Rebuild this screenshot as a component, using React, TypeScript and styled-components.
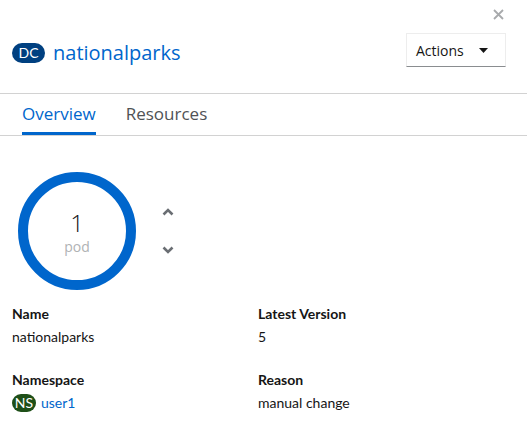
import React from "react";
import styled, { createGlobalStyle } from "styled-components";

const GlobalStyle = createGlobalStyle`
  html, body { margin: 0; padding: 0; background: #fff; }
  body { font-family: "Open Sans", "Liberation Sans", sans-serif; color: #151515; }
  * { box-sizing: border-box; }
`;

const Page = styled.div`
  width: 527px;
  height: 426px;
  background: #fff;
  overflow: hidden;
`;

const Header = styled.div`
  display: flex;
  flex-direction: column;
  padding: 9px 23px 26px 12px;
  border-bottom: 1px solid #d2d2d2;
`;

const CloseRow = styled.div`
  display: flex;
  justify-content: flex-end;
  height: 10px;
`;

const CloseButton = styled.button`
  border: 0;
  padding: 0;
  background: none;
  width: 11px;
  height: 11px;
  display: flex;
  cursor: pointer;
`;

const TitleRow = styled.div`
  display: flex;
  justify-content: space-between;
  align-items: center;
  margin-top: 14px;
`;

const Title = styled.h1`
  display: flex;
  align-items: center;
  gap: 8px;
  margin: 6px 0 0;
  font-weight: 400;
`;

const Badge = styled.span<{ $bg: string; $w: number; $h: number; $fs: number }>`
  display: inline-flex;
  align-items: center;
  justify-content: center;
  width: ${(p) => p.$w}px;
  height: ${(p) => p.$h}px;
  border-radius: ${(p) => p.$h / 2}px;
  background: ${(p) => p.$bg};
  color: #fff;
  font-family: "Lato", "Open Sans", sans-serif;
  font-size: ${(p) => p.$fs}px;
  line-height: 1;
  flex-shrink: 0;
`;

const ResourceName = styled.span`
  font-size: 20px;
  line-height: 24px;
  color: #0066cc;
`;

const ActionsButton = styled.button`
  display: flex;
  align-items: center;
  justify-content: space-between;
  width: 100px;
  height: 34px;
  margin-right: -2px;
  padding: 0 17px 0 9px;
  background: #fff;
  border: 1px solid #ededed;
  border-bottom-color: #8a8d90;
  font-family: inherit;
  font-size: 14px;
  color: #151515;
  cursor: pointer;
`;

const Tabs = styled.nav`
  display: flex;
  gap: 30px;
  padding: 0 0 0 22px;
  border-bottom: 1px solid #d2d2d2;
`;

const Tab = styled.div<{ $active?: boolean }>`
  padding: 8px 0 6px;
  font-size: 17px;
  line-height: 24px;
  color: ${(p) => (p.$active ? "#0066cc" : "#4f5255")};
  border-bottom: 3px solid ${(p) => (p.$active ? "#0066cc" : "transparent")};
`;

const Body = styled.div`
  padding: 36px 12px 0;
  display: flex;
  flex-direction: column;
`;

const PodRow = styled.div`
  display: flex;
  align-items: center;
  gap: 26px;
  padding-left: 6px;
`;

const DonutWrap = styled.div`
  position: relative;
  width: 118px;
  height: 118px;
`;

const DonutLabel = styled.div`
  position: absolute;
  inset: 0;
  display: flex;
  flex-direction: column;
  align-items: center;
  justify-content: center;
  gap: 2px;
  padding-top: 4px;
`;

const PodCount = styled.span`
  font-size: 24px;
  line-height: 26px;
  font-weight: 300;
  color: #151515;
`;

const PodUnit = styled.span`
  font-size: 14px;
  line-height: 18px;
  color: #b0b2b4;
`;

const Scaler = styled.div`
  display: flex;
  flex-direction: column;
  gap: 27px;
  margin-top: 0px;
`;

const ScaleButton = styled.button`
  border: 0;
  padding: 0;
  background: none;
  width: 12px;
  height: 11px;
  display: flex;
  align-items: center;
  cursor: pointer;
`;

const Details = styled.dl`
  display: grid;
  grid-template-columns: 246px 1fr;
  row-gap: 23px;
  margin: 14px 0 0;
  font-family: "Lato", "Open Sans", sans-serif;
`;

const DetailItem = styled.div`
  display: flex;
  flex-direction: column;
  gap: 3px;
`;

const Term = styled.dt`
  font-size: 14px;
  line-height: 20px;
  font-weight: 700;
  color: #151515;
`;

const Desc = styled.dd`
  margin: 0;
  font-size: 14px;
  line-height: 20px;
  color: #151515;
  display: flex;
  align-items: center;
  gap: 5px;
`;

const Link = styled.a`
  color: #0066cc;
  text-decoration: none;
`;

const Donut = () => (
  <svg width="118" height="118" viewBox="0 0 118 118">
    <circle cx="59" cy="59" r="54" fill="none" stroke="#0066cc" strokeWidth="10" />
  </svg>
);

export default function App() {
  return (
    <Page>
      <GlobalStyle />
      <Header>
        <CloseRow>
          <CloseButton aria-label="Close">
            <svg width="11" height="11" viewBox="0 0 11 11">
              <path d="M1 1 L10 10 M10 1 L1 10" stroke="#a8aaac" strokeWidth="1.8" />
            </svg>
          </CloseButton>
        </CloseRow>
        <TitleRow>
          <Title>
            <Badge $bg="#004080" $w={33} $h={20} $fs={14}>DC</Badge>
            <ResourceName>nationalparks</ResourceName>
          </Title>
          <ActionsButton>
            Actions
            <svg width="9" height="5" viewBox="0 0 9 5">
              <path d="M0 0 H9 L4.5 5 Z" fill="#151515" />
            </svg>
          </ActionsButton>
        </TitleRow>
      </Header>
      <Tabs>
        <Tab $active>Overview</Tab>
        <Tab>Resources</Tab>
      </Tabs>
      <Body>
        <PodRow>
          <DonutWrap>
            <Donut />
            <DonutLabel>
              <PodCount>1</PodCount>
              <PodUnit>pod</PodUnit>
            </DonutLabel>
          </DonutWrap>
          <Scaler>
            <ScaleButton aria-label="Increase">
              <svg width="12" height="8" viewBox="0 0 12 8">
                <path d="M1.5 6.5 L6 2 L10.5 6.5" fill="none" stroke="#6a6e73" strokeWidth="2.6" />
              </svg>
            </ScaleButton>
            <ScaleButton aria-label="Decrease">
              <svg width="12" height="8" viewBox="0 0 12 8">
                <path d="M1.5 1.5 L6 6 L10.5 1.5" fill="none" stroke="#6a6e73" strokeWidth="2.6" />
              </svg>
            </ScaleButton>
          </Scaler>
        </PodRow>
        <Details>
          <DetailItem>
            <Term>Name</Term>
            <Desc>nationalparks</Desc>
          </DetailItem>
          <DetailItem>
            <Term>Latest Version</Term>
            <Desc>5</Desc>
          </DetailItem>
          <DetailItem>
            <Term>Namespace</Term>
            <Desc>
              <Badge $bg="#1e4f18" $w={24} $h={18} $fs={14}>NS</Badge>
              <Link href="#">user1</Link>
            </Desc>
          </DetailItem>
          <DetailItem>
            <Term>Reason</Term>
            <Desc>manual change</Desc>
          </DetailItem>
        </Details>
      </Body>
    </Page>
  );
}
